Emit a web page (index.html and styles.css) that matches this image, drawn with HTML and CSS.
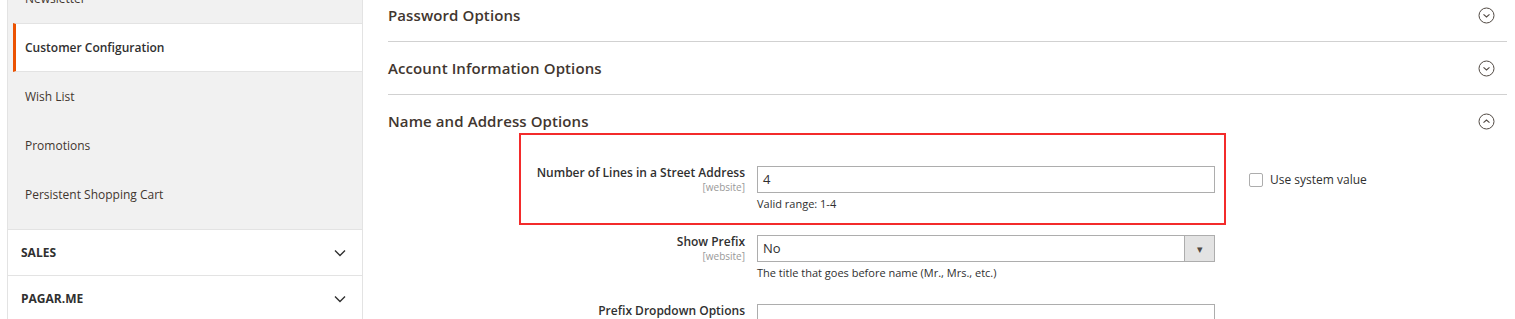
FILE: index.html
```html
<!DOCTYPE html>
<html>
<head>
  <meta charset="UTF-8">
  <title>Configuration</title>
  <link rel="stylesheet" href="styles.css">
</head>
<body>
<div class="page">
  <div class="sidebar">
    <ul class="nav">
      <li class="item">Newsletter</li>
      <li class="item active">Customer Configuration</li>
      <li class="item">Wish List</li>
      <li class="item">Promotions</li>
      <li class="item">Persistent Shopping Cart</li>
    </ul>
    <div class="group">
      <span>SALES</span>
      <svg class="chev" width="12" height="8" viewBox="0 0 12 8"><path d="M1 1.5l5 5 5-5" fill="none" stroke="#303030" stroke-width="1.4"/></svg>
    </div>
    <div class="group">
      <span>PAGAR.ME</span>
      <svg class="chev" width="12" height="8" viewBox="0 0 12 8"><path d="M1 1.5l5 5 5-5" fill="none" stroke="#303030" stroke-width="1.4"/></svg>
    </div>
  </div>

  <div class="main">
    <div class="section first">
      <span class="title">Password Options</span>
      <svg width="17" height="17" viewBox="0 0 17 17"><circle cx="8.5" cy="8.5" r="7.5" fill="none" stroke="#514943" stroke-width="1"/><path d="M5.5 7.3l3 2.6 3-2.6" fill="none" stroke="#514943" stroke-width="1.1"/></svg>
    </div>
    <div class="section">
      <span class="title">Account Information Options</span>
      <svg width="17" height="17" viewBox="0 0 17 17"><circle cx="8.5" cy="8.5" r="7.5" fill="none" stroke="#514943" stroke-width="1"/><path d="M5.5 7.3l3 2.6 3-2.6" fill="none" stroke="#514943" stroke-width="1.1"/></svg>
    </div>
    <div class="section open">
      <span class="title">Name and Address Options</span>
      <svg width="17" height="17" viewBox="0 0 17 17"><circle cx="8.5" cy="8.5" r="7.5" fill="none" stroke="#514943" stroke-width="1"/><path d="M5.5 9.7l3-2.6 3 2.6" fill="none" stroke="#514943" stroke-width="1.1"/></svg>
    </div>

    <div class="fieldset">
      <div class="highlight"></div>

      <div class="row">
        <div class="label">Number of Lines in a Street Address<span class="scope">[website]</span></div>
        <div class="control">
          <div class="input">4</div>
          <div class="note">Valid range: 1-4</div>
        </div>
        <label class="system"><span class="box"></span>Use system value</label>
      </div>

      <div class="row">
        <div class="label">Show Prefix<span class="scope">[website]</span></div>
        <div class="control">
          <div class="input select"><span>No</span><span class="arrow">&#9662;</span></div>
          <div class="note">The title that goes before name (Mr., Mrs., etc.)</div>
        </div>
      </div>

      <div class="row">
        <div class="label">Prefix Dropdown Options</div>
        <div class="control">
          <div class="input"></div>
        </div>
      </div>
    </div>
  </div>
</div>
</body>
</html>
```

FILE: styles.css
```css
body {
  margin: 0;
  font-family: "Open Sans", "Liberation Sans", sans-serif;
  color: #303030;
  background: #fff;
}
.page {
  display: flex;
  height: 319px;
  overflow: hidden;
}

/* sidebar */
.sidebar {
  width: 356px;
  margin-left: 7px;
  box-sizing: border-box;
  border-left: 1px solid #e3e3e3;
  border-right: 1px solid #e3e3e3;
  flex-shrink: 0;
}
.nav {
  list-style: none;
  margin: -26px 0 0;
  padding: 0 0 10px;
  background: #f1f1f1;
}
.item {
  height: 49px;
  display: flex;
  align-items: center;
  padding-left: 17px;
  font-size: 12px;
  color: #41362f;
}
.item.active {
  background: #fff;
  margin-left: 5px;
  padding-left: 9px;
  border-left: 3px solid #eb5202;
  font-weight: 600;
  color: #303030;
  box-sizing: border-box;
  border-top: 1px solid #e3e3e3;
  border-bottom: 1px solid #e3e3e3;
}
.group {
  height: 45px;
  border-top: 1px solid #e3e3e3;
  display: flex;
  align-items: center;
  justify-content: space-between;
  padding: 0 16px 0 13px;
  font-size: 12px;
  font-weight: 700;
}

/* main */
.main {
  flex: 1;
  padding: 0 8px 0 25px;
}
.section {
  height: 52px;
  border-bottom: 1px solid #d1d1d1;
  display: flex;
  align-items: center;
  justify-content: space-between;
  padding-right: 12px;
}
.section.first {
  margin-top: -11px;
}
.section.open {
  border-bottom-color: transparent;
}
.title {
  font-size: 15px;
  font-weight: 600;
  color: #41362f;
  letter-spacing: 0.1px;
}

.fieldset {
  position: relative;
  padding-top: 18px;
}
.highlight {
  position: absolute;
  left: 131px;
  top: -15px;
  width: 707px;
  height: 92px;
  box-sizing: border-box;
  border: 2px solid #f32b2b;
}
.row {
  display: grid;
  grid-template-columns: 357px 458px auto;
  column-gap: 12px;
  margin-bottom: 23px;
}
.label {
  text-align: right;
  font-size: 12px;
  font-weight: 600;
  line-height: 16px;
  margin-top: -1px;
}
.scope {
  display: block;
  font-size: 10px;
  font-weight: 400;
  line-height: 12px;
  color: #999;
}
.input {
  height: 27px;
  box-sizing: border-box;
  border: 1px solid #adadad;
  font-size: 13px;
  line-height: 25px;
  padding: 0 5px;
  background: #fff;
}
.select {
  display: flex;
  justify-content: space-between;
  padding-right: 0;
}
.arrow {
  width: 29px;
  background: #e3e3e3;
  border-left: 1px solid #adadad;
  text-align: center;
  font-size: 11px;
  color: #514943;
}
.note {
  margin-top: 3px;
  font-size: 11px;
  line-height: 16px;
}
.system {
  display: flex;
  align-items: center;
  gap: 7px;
  margin-left: 22px;
  height: 27px;
  font-size: 12px;
}
.box {
  width: 14px;
  height: 14px;
  box-sizing: border-box;
  border: 1px solid #adadad;
  border-radius: 2px;
  background: #fff;
}
```
